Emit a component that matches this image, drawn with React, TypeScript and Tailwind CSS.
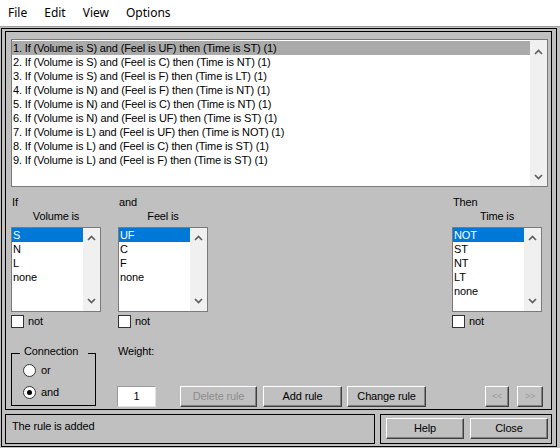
import clsx from "clsx";

const rules = [
  "1. If (Volume is S) and (Feel is UF) then (Time is ST) (1)",
  "2. If (Volume is S) and (Feel is C) then (Time is NT) (1)",
  "3. If (Volume is S) and (Feel is F) then (Time is LT) (1)",
  "4. If (Volume is N) and (Feel is F) then (Time is NT) (1)",
  "5. If (Volume is N) and (Feel is C) then (Time is NT) (1)",
  "6. If (Volume is N) and (Feel is UF) then (Time is ST) (1)",
  "7. If (Volume is L) and (Feel is UF) then (Time is NOT) (1)",
  "8. If (Volume is L) and (Feel is C) then (Time is ST) (1)",
  "9. If (Volume is L) and (Feel is F) then (Time is ST) (1)",
];

const Chevron = ({ up }: { up?: boolean }) => (
  <svg width="9" height="6" viewBox="0 0 9 6">
    <path
      d={up ? "M1 5 L4.5 1.5 L8 5" : "M1 1 L4.5 4.5 L8 1"}
      fill="none"
      stroke="#606060"
      strokeWidth="1.7"
    />
  </svg>
);

const ScrollBar = ({ className }: { className?: string }) => (
  <div
    className={clsx(
      "flex w-[17px] flex-col items-center justify-between bg-[#f0f0f0]",
      className
    )}
  >
    <Chevron up />
    <Chevron />
  </div>
);

const ListBox = ({ items, selected }: { items: string[]; selected: number }) => (
  <div className="flex h-[85px] w-[90px] border border-[#7a7a7a] bg-white">
    <div className="flex-1">
      {items.map((item, i) => (
        <div
          key={item}
          className={clsx(
            "h-[14px] pl-[1px] leading-[14px]",
            i === selected ? "bg-[#0078d7] text-white" : "text-black"
          )}
        >
          {item}
        </div>
      ))}
    </div>
    <ScrollBar className="py-[7px]" />
  </div>
);

const CheckBox = () => (
  <div className="mt-[2px] flex h-[14px] items-center gap-[4px]">
    <div className="h-[13px] w-[13px] border border-[#333] bg-white" />
    <span>not</span>
  </div>
);

const Radio = ({ label, checked }: { label: string; checked?: boolean }) => (
  <div className="flex h-[14px] items-center gap-[5px]">
    <div className="flex h-[13px] w-[13px] items-center justify-center rounded-full border border-[#333] bg-white">
      {checked && <div className="h-[5px] w-[5px] rounded-full bg-black" />}
    </div>
    <span>{label}</span>
  </div>
);

const Btn = ({
  label,
  className,
  disabled,
}: {
  label: string;
  className?: string;
  disabled?: boolean;
}) => (
  <div
    className={clsx(
      "flex h-[21px] items-center justify-center border border-t-white border-l-white border-r-[#404040] border-b-[#404040] bg-[#c0c0c0] shadow-[inset_-1px_-1px_#808080]",
      disabled ? "text-[#8d8d8d]" : "text-black",
      className
    )}
  >
    {label}
  </div>
);

const ColumnHead = ({ top, sub }: { top: string; sub: string }) => (
  <>
    <div className="h-[14px] pl-[1px] leading-[14px]">{top}</div>
    <div className="h-[14px] text-center leading-[14px]">{sub}</div>
  </>
);

export default function App() {
  return (
    <div className="flex h-[448px] w-[560px] flex-col overflow-hidden bg-[#c0c0c0] font-['Liberation_Sans',Arial,sans-serif] text-[11px] tracking-[-0.15px] text-black">
      <div className="flex h-[27px] items-center gap-[17px] border-b border-[#a0a0a0] bg-white pb-[1px] pl-[8px] font-['Noto_Sans',sans-serif] text-[12px] tracking-normal">
        <span>File</span>
        <span>Edit</span>
        <span>View</span>
        <span>Options</span>
      </div>

      <div className="ml-[1px] mt-[1px] flex h-[419px] w-[556px] flex-col border border-black pb-[2px] pl-[3px] pr-[4px] pt-[2px]">
        <div className="flex h-[379px] flex-col border border-black pl-[5px] pr-[3px] pt-[7px]">
          <div className="flex h-[148px] border border-[#7a7a7a] bg-white">
            <div className="flex-1 pt-[1px]">
              {rules.map((r, i) => (
                <div
                  key={r}
                  className={clsx(
                    "h-[14px] whitespace-nowrap pl-[1px] leading-[14px]",
                    i === 0 && "bg-[#aaaaaa]"
                  )}
                >
                  {r}
                </div>
              ))}
            </div>
            <ScrollBar className="pb-[6px] pt-[9px]" />
          </div>

          <div className="mt-[8px] flex">
            <div className="flex w-[90px] flex-col">
              <ColumnHead top="If" sub="Volume is" />
              <div className="mt-[4px]">
                <ListBox items={["S", "N", "L", "none"]} selected={0} />
              </div>
              <CheckBox />
            </div>
            <div className="ml-[17px] flex w-[90px] flex-col">
              <ColumnHead top="and" sub="Feel is" />
              <div className="mt-[4px]">
                <ListBox items={["UF", "C", "F", "none"]} selected={0} />
              </div>
              <CheckBox />
            </div>
            <div className="ml-[244px] flex w-[90px] flex-col">
              <ColumnHead top="Then" sub="Time is" />
              <div className="mt-[4px]">
                <ListBox items={["NOT", "ST", "NT", "LT", "none"]} selected={0} />
              </div>
              <CheckBox />
            </div>
          </div>

          <div className="mt-[16px] flex items-start">
            <div className="relative mt-[9px] flex h-[53px] w-[85px] flex-col border border-black pl-[11px] pt-[9px]">
              <span className="absolute -top-[10px] left-[8px] h-[14px] bg-[#c0c0c0] pl-[4px] pr-[10px] leading-[14px]">
                Connection
              </span>
              <Radio label="or" />
              <div className="mt-[8px]">
                <Radio label="and" checked />
              </div>
            </div>
            <div className="ml-[21px] flex flex-col">
              <div className="h-[14px] pl-[1px] leading-[14px]">Weight:</div>
              <div className="mt-[28px] flex items-center">
                <div className="flex h-[21px] w-[39px] items-center justify-center border border-b-[#e3e3e3] border-l-[#9a9a9a] border-r-[#e3e3e3] border-t-[#9a9a9a] bg-white">
                  1
                </div>
                <Btn label="Delete rule" disabled className="ml-[24px] w-[77px]" />
                <Btn label="Add rule" className="ml-[6px] w-[79px]" />
                <Btn label="Change rule" className="ml-[5px] w-[79px]" />
                <Btn label="<<" disabled className="ml-[59px] w-[24px] text-[9px] text-[#9a9a9a]" />
                <Btn label=">>" disabled className="ml-[8px] w-[26px] text-[9px] text-[#9a9a9a]" />
              </div>
            </div>
          </div>
        </div>

        <div className="mt-[4px] flex h-[30px]">
          <div className="w-[370px] border border-black pl-[6px] pt-[4px] leading-[14px]">
            The rule is added
          </div>
          <div className="ml-[5px] flex w-[172px] items-start border border-black pl-[5px] pt-[3px]">
            <Btn label="Help" className="w-[78px]" />
            <Btn label="Close" className="ml-[6px] w-[78px]" />
          </div>
        </div>
      </div>
    </div>
  );
}
